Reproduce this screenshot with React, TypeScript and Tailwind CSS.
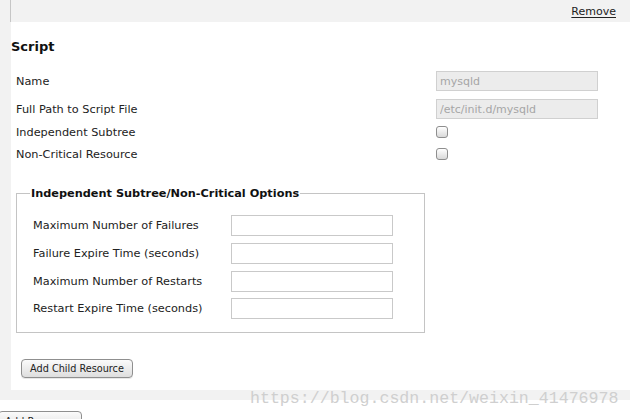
import React from 'react';

const rowLabel = 'w-[420px] shrink-0';

function Checkbox() {
  return (
    <input
      type="checkbox"
      className="appearance-none w-[12px] h-[12px] rounded-[3px] border border-[#8e8e8e] bg-linear-to-b from-white to-[#d9d9d9] m-0"
    />
  );
}

function OptionRow({ label, className }: { label: string; className?: string }) {
  return (
    <div className={`flex items-center h-[20px] ${className ?? ''}`}>
      <span className="w-[198px] shrink-0">{label}</span>
      <input type="text" className="w-[162px] h-[21px] border border-[#c9c9c9] bg-white outline-none" />
    </div>
  );
}

export default function App() {
  return (
    <div
      className="relative w-[630px] h-[419px] overflow-hidden bg-white text-[11.3px] leading-[13px] text-[#222]"
      style={{ fontFamily: '"DejaVu Sans", Verdana, sans-serif' }}
    >
      <div className="bg-[#f2f2f2] pb-[10px]">
        {/* header strip */}
        <div className="flex h-[22px]">
          <div className="ml-[10px] flex flex-1 justify-end border-l border-[#c6c6c6] pt-[5px] pr-[14px]">
            <a className="underline underline-offset-[2px] text-[11px] text-[#222] cursor-pointer">Remove</a>
          </div>
        </div>

        <div className="flex">
          <div className="w-[11px] shrink-0" />
          <div className="flex-1 h-[368px] bg-white pt-[17px]">
            <h3 className="text-[13px] leading-[15px] font-bold text-[#111]">Script</h3>

            <div className="mt-[17px] pl-[5px]">
              <div className="flex items-center h-[20px]">
                <span className={rowLabel}>Name</span>
                <input
                  disabled
                  value="mysqld"
                  readOnly
                  className="w-[162px] h-[20px] border border-[#d0d0d0] bg-[#ececec] pl-[3px] text-[11px] text-[#a6a6a6]"
                />
              </div>
              <div className="flex items-center h-[20px] mt-[8px]">
                <span className={rowLabel}>Full Path to Script File</span>
                <input
                  disabled
                  value="/etc/init.d/mysqld"
                  readOnly
                  className="w-[162px] h-[20px] border border-[#d0d0d0] bg-[#ececec] pl-[3px] text-[11px] text-[#a6a6a6]"
                />
              </div>
              <div className="flex items-center h-[22px] mt-[2px]">
                <span className={rowLabel}>Independent Subtree</span>
                <Checkbox />
              </div>
              <div className="flex items-center h-[22px]">
                <span className={rowLabel}>Non-Critical Resource</span>
                <Checkbox />
              </div>

              <fieldset className="mt-[22px] w-[409px] h-[146px] border border-[#c4c4c4] px-[16px]">
                <legend className="-ml-[3px] px-[1px] font-bold text-[#111]">
                  Independent Subtree/Non-Critical Options
                </legend>
                <OptionRow label="Maximum Number of Failures" className="mt-[15px]" />
                <OptionRow label="Failure Expire Time (seconds)" className="mt-[8px]" />
                <OptionRow label="Maximum Number of Restarts" className="mt-[8px]" />
                <OptionRow label="Restart Expire Time (seconds)" className="mt-[7px]" />
              </fieldset>

              <button className="mt-[26px] ml-[5px] w-[112px] h-[19px] rounded-[4px] border border-[#8f8f8f] bg-linear-to-b from-[#fbfbfb] to-[#dedede] text-[9.7px] leading-[11px] text-[#222] shadow-[0_1px_0_#e8e8e8]">
                Add Child Resource
              </button>
            </div>
          </div>
        </div>
      </div>

      <div className="pt-[11px]">
        <button className="-ml-[2px] w-[84px] h-[20px] rounded-[4px] border border-[#8f8f8f] bg-linear-to-b from-[#fbfbfb] to-[#dedede] text-[10px] text-left pl-[6px] text-[#222]">
          Add Resource
        </button>
      </div>

      {/* watermark */}
      <div
        className="absolute left-[250px] top-[389px] text-[16.6px] leading-[20px] text-[#cfcfcf]"
        style={{ fontFamily: '"Liberation Mono", monospace' }}
      >
        https://blog.csdn.net/weixin_41476978
      </div>
    </div>
  );
}
